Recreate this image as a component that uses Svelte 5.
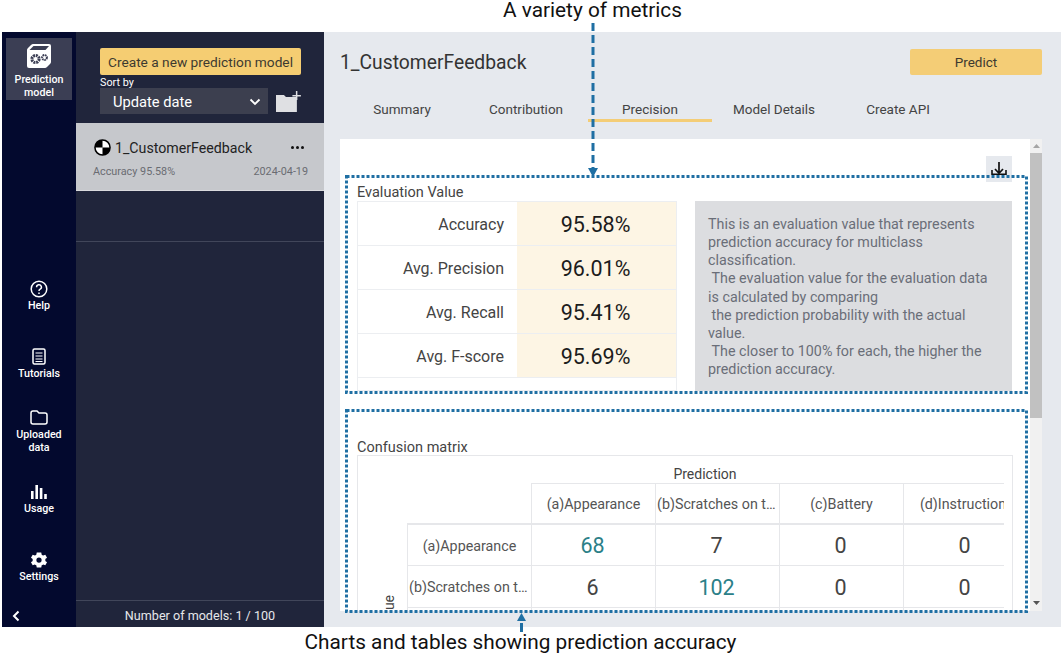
<script>
	const navBottom = ['Help', 'Tutorials', 'Uploaded data', 'Usage', 'Settings'];
	const tabs = ['Summary', 'Contribution', 'Precision', 'Model Details', 'Create API'];
	const metrics = [
		{ label: 'Accuracy', value: '95.58%' },
		{ label: 'Avg. Precision', value: '96.01%' },
		{ label: 'Avg. Recall', value: '95.41%' },
		{ label: 'Avg. F-score', value: '95.69%' }
	];
	const columns = ['(a)Appearance', '(b)Scratches on the product', '(c)Battery', '(d)Instruction'];
	const rows = [
		{ label: '(a)Appearance', cells: [68, 7, 0, 0], hit: 0 },
		{ label: '(b)Scratches on the product', cells: [6, 102, 0, 0], hit: 1 },
		{ label: '', cells: ['', '', '', ''], hit: -1 }
	];
</script>

<div class="page">
	<div class="caption top">A variety of metrics</div>

	<div class="app">
		<nav class="nav">
			<div class="nav-item active">
				<svg width="26" height="26" viewBox="0 0 26 26">
					<path d="M7 1h16q2 0 2 2v16q0 1-1 2l-3 3q-1 1-2 1H3q-2 0-2-2V7q0-1 1-2l3-3q1-1 2-1z" fill="#fff" />
					<path d="M7.500 3H23l-3.500 4H3.500z" fill="#3b3e54" />
					<circle cx="9.500" cy="16" r="3.600" fill="none" stroke="#3b3e54" stroke-width="3" stroke-dasharray="2 .8" />
					<circle cx="18.500" cy="14.500" r="2.400" fill="none" stroke="#3b3e54" stroke-width="2" stroke-dasharray="1.500 .6" />
				</svg>
				<span>Prediction model</span>
			</div>

			<div class="nav-lower">
				{#each navBottom as item}
					<div class="nav-item slot">
						<div class="nav-icon">
							{#if item === 'Help'}
								<svg width="18" height="18" viewBox="0 0 18 18" fill="none" stroke="#fff" stroke-width="1.500">
									<circle cx="9" cy="9" r="7.800" />
									<path d="M6.600 7.200a2.400 2.400 0 1 1 3.600 2c-.8.5-1.200 1-1.200 1.900" />
									<path d="M9 12.400v1.500" />
								</svg>
							{:else if item === 'Tutorials'}
								<svg width="14" height="17" viewBox="0 0 14 17" fill="none" stroke="#fff" stroke-width="1.500">
									<rect x="1" y="1" width="12" height="15" rx="1.500" />
									<path d="M3.500 5h7M3.500 8h7M3.500 11h7M3.500 13.500h7" stroke-width="1.200" />
								</svg>
							{:else if item === 'Uploaded data'}
								<svg width="18" height="15" viewBox="0 0 18 15" fill="none" stroke="#fff" stroke-width="1.500">
									<path d="M1 3q0-2 2-2h4l2 2h6q2 0 2 2v7q0 2-2 2H3q-2 0-2-2z" />
								</svg>
							{:else if item === 'Usage'}
								<svg width="16" height="14" viewBox="0 0 16 14" fill="#fff">
									<rect x="0" y="6" width="2.600" height="8" />
									<rect x="4.400" y="0" width="2.600" height="14" />
									<rect x="8.800" y="3" width="2.600" height="11" />
									<rect x="13.200" y="9" width="2.600" height="5" />
								</svg>
							{:else}
								<svg width="18" height="18" viewBox="0 0 24 24" fill="#fff">
									<path fill-rule="evenodd" d="M20.400 13.200a8.500 8.500 0 0 0 0-2.400l2.300-1.800-2.300-4-2.800 1.100a8.500 8.500 0 0 0-2-1.200L15 2h-6l-.6 2.900a8.500 8.500 0 0 0-2 1.200L3.600 5l-2.300 4 2.300 1.800a8.500 8.500 0 0 0 0 2.400L1.300 15l2.300 4 2.800-1.100a8.500 8.500 0 0 0 2 1.200L9 22h6l.6-2.900a8.500 8.500 0 0 0 2-1.200l2.800 1.100 2.300-4zM12 15.500a3.500 3.500 0 1 1 0-7 3.500 3.500 0 0 1 0 7z" />
								</svg>
							{/if}
						</div>
						<span>{item}</span>
					</div>
				{/each}
			</div>

			<div class="collapse">
				<svg width="8" height="12" viewBox="0 0 8 12" fill="none" stroke="#fff" stroke-width="2">
					<path d="M6.500 1.500 2 6l4.500 4.500" />
				</svg>
			</div>
		</nav>

		<aside class="list">
			<div class="list-head">
				<button class="create">Create a new prediction model</button>
				<div class="sort-label">Sort by</div>
				<div class="sort-row">
					<div class="select">
						<span>Update date</span>
						<svg width="12" height="8" viewBox="0 0 12 8" fill="none" stroke="#fff" stroke-width="1.800">
							<path d="M1.500 1.500 6 6l4.500-4.500" />
						</svg>
					</div>
					<svg width="25" height="21" viewBox="0 0 25 21" fill="#dfe0e3">
						<path d="M0 4h8l2 2h11v15H0z" />
						<path d="M20 0h1.500v4H25v1.500h-3.500V9H20V5.500h-3.500V4H20z" />
					</svg>
				</div>
			</div>

			<div class="model">
				<div class="model-top">
					<svg width="17" height="17" viewBox="0 0 18 18">
						<circle cx="9" cy="9" r="8" fill="#fff" stroke="#000" stroke-width="1.600" />
						<path d="M9 1a8 8 0 0 0-8 8h8zM9 9h8a8 8 0 0 1-8 8z" fill="#000" />
					</svg>
					<span class="model-name">1_CustomerFeedback</span>
					<span class="dots"><i></i><i></i><i></i></span>
				</div>
				<div class="model-meta">
					<span>Accuracy 95.58%</span>
					<span>2024-04-19</span>
				</div>
			</div>

			<div class="list-rule"></div>
			<div class="list-foot">Number of models: 1 / 100</div>
		</aside>

		<main class="main">
			<header class="main-head">
				<h1>1_CustomerFeedback</h1>
				<button class="predict">Predict</button>
			</header>

			<div class="tabs">
				{#each tabs as tab}
					<div class="tab" class:current={tab === 'Precision'}>{tab}</div>
				{/each}
			</div>

			<div class="panel">
				<div class="scroll">
					<div class="tools">
						<div class="download">
							<svg width="18" height="18" viewBox="0 0 18 18" fill="none" stroke="#111" stroke-width="1.700">
								<path d="M9 2v11M5 9l4 4.300L13 9" />
								<path d="M2 10v4.200h14V10" stroke-width="1.600" />
							</svg>
						</div>
					</div>

					<h2 class="eval-title">Evaluation Value</h2>
					<div class="eval">
						<div class="eval-table">
							{#each metrics as m}
								<div class="eval-row">
									<div class="eval-label">{m.label}</div>
									<div class="eval-value">{m.value}</div>
								</div>
							{/each}
						</div>
						<div class="eval-note">
							This is an evaluation value that represents prediction accuracy for multiclass classification.<br />
							&nbsp;The evaluation value for the evaluation data is calculated by comparing<br />
							&nbsp;the prediction probability with the actual value.<br />
							&nbsp;The closer to 100% for each, the higher the prediction accuracy.
						</div>
					</div>

					<h2 class="matrix-title">Confusion matrix</h2>
					<div class="matrix">
						<div class="pred-label">Prediction</div>
						<div class="matrix-body">
							<div class="true-label"><span>True value</span></div>
							<div class="matrix-grid">
								<div class="corner"></div>
								{#each columns as c}
									<div class="col-head"><span>{c}</span></div>
								{/each}
								{#each rows as r}
									<div class="row-head"><span>{r.label}</span></div>
									{#each r.cells as n, i}
										<div class="cell" class:hit={i === r.hit}>{n}</div>
									{/each}
								{/each}
							</div>
						</div>
					</div>
				</div>

				<div class="scrollbar">
					<svg width="7" height="4" viewBox="0 0 7 4"><path d="M3.500 0 7 4H0z" fill="#a5a5a5" /></svg>
					<div class="thumb"></div>
					<svg width="7" height="4" viewBox="0 0 7 4"><path d="M3.500 4 7 0H0z" fill="#555" /></svg>
				</div>
			</div>
		</main>
	</div>

	<div class="caption bottom">Charts and tables showing prediction accuracy</div>

	<!-- callouts drawn over the screenshot -->
	<svg class="callouts" width="1061" height="655" viewBox="0 0 1061 655" fill="none" stroke="#1f6fa3">
		<rect x="346.500" y="176.500" width="680" height="216" stroke-width="3" stroke-dasharray="3 2" />
		<rect x="346.500" y="410.500" width="680" height="201" stroke-width="3" stroke-dasharray="3 2" />
		<path d="M593 23v147" stroke-width="3" stroke-dasharray="8 4" />
		<path d="M588 168h10l-5 9z" fill="#1f6fa3" stroke="none" />
		<path d="M521.500 613l4.500 8h-9z" fill="#1f6fa3" stroke="none" />
		<path d="M521.500 623v9" stroke-width="3" />
	</svg>
</div>

<style>
	:global(body) {
		margin: 0;
		background: #fff;
	}

	.page {
		position: relative;
		width: 1061px;
		height: 655px;
		overflow: hidden;
		font-family: Roboto, "Noto Sans", sans-serif;
		color: #333;
	}

	.caption {
		display: flex;
		align-items: center;
		justify-content: center;
		color: #111;
		font-size: 20.800px;
		white-space: nowrap;
	}

	.caption.top {
		height: 32px;
		width: 1185px;
		padding-bottom: 13px;
		box-sizing: border-box;
	}

	.caption.bottom {
		height: 28px;
		width: 1041px;
		padding-top: 2px;
		box-sizing: border-box;
	}

	.app {
		display: flex;
		height: 595px;
		margin-left: 2px;
	}

	/* left rail */
	.nav {
		width: 74px;
		flex: none;
		background: #03092e;
		display: flex;
		flex-direction: column;
		align-items: center;
		padding-top: 6px;
		box-sizing: border-box;
		color: #fff;
	}

	.nav-item {
		display: flex;
		flex-direction: column;
		align-items: center;
		text-align: center;
		font-size: 10.700px;
		font-weight: 500;
		line-height: 13px;
		width: 66px;
		gap: 1px;
	}

	.nav-item.active {
		background: #3b3e54;
		height: 62px;
		padding-top: 5px;
		box-sizing: border-box;
		gap: 4px;
	}

	.nav-item.slot {
		height: 67.800px;
		justify-content: center;
	}

	.nav-icon {
		height: 18px;
		display: flex;
		align-items: center;
	}

	.nav-lower {
		margin-top: 162px;
		display: flex;
		flex-direction: column;
	}

	.collapse {
		margin-top: auto;
		padding: 0 46px 7px 0;
		height: 20px;
		box-sizing: border-box;
	}

	/* model list */
	.list {
		width: 248px;
		flex: none;
		background: #20253b;
		display: flex;
		flex-direction: column;
		color: #fff;
	}

	.list-head {
		padding: 16px 23px 9px 24px;
	}

	.create {
		display: block;
		width: 201px;
		height: 27px;
		padding: 1px 0 0;
		border: 0;
		border-radius: 2px;
		background: #f5cd72;
		color: #3d3a30;
		font: 13.700px Roboto, sans-serif;
		white-space: nowrap;
	}

	.sort-label {
		font-size: 10.800px;
		line-height: 13px;
		padding-top: 1px;
		margin-bottom: -1px;
	}

	.sort-row {
		display: flex;
		align-items: center;
		gap: 8px;
	}

	.select {
		width: 169px;
		height: 26px;
		background: #3c3f4f;
		display: flex;
		align-items: center;
		justify-content: space-between;
		padding: 1px 7px 0 13px;
		box-sizing: border-box;
		font-size: 14.700px;
	}

	.model {
		background: #c6c8cc;
		height: 68px;
		padding: 14px 16px 0 18px;
		box-sizing: border-box;
		border-bottom: 1px solid #d9dadd;
		color: #222;
	}

	.model-top {
		display: flex;
		align-items: center;
		gap: 4px;
		height: 20px;
	}

	.model-name {
		font-size: 14.200px;
		flex: 1;
		padding-top: 1px;
	}

	.dots {
		display: flex;
		gap: 2px;
		margin-right: 4px;
	}

	.dots i {
		width: 3px;
		height: 3px;
		border-radius: 50%;
		background: #111;
	}

	.model-meta {
		display: flex;
		justify-content: space-between;
		margin: 8px 0 0 -1px;
		font-size: 10.800px;
		color: #6a6c72;
	}

	.list-rule {
		margin-top: 50px;
		border-top: 1px solid #41465a;
	}

	.list-foot {
		margin-top: auto;
		height: 27px;
		padding-top: 2px;
		box-sizing: border-box;
		border-top: 1px solid #41465a;
		display: flex;
		align-items: center;
		justify-content: center;
		font-size: 12.600px;
		color: #e6e7ea;
	}

	/* main area */
	.main {
		flex: 1;
		background: #e6e9ee;
		padding: 17px 19px 16px 16px;
		box-sizing: border-box;
		display: flex;
		flex-direction: column;
		min-width: 0;
	}

	.main-head {
		display: flex;
		align-items: center;
		justify-content: space-between;
		height: 26px;
	}

	h1 {
		margin: 0;
		font-size: 19.300px;
		font-weight: 400;
		color: #333;
	}

	.predict {
		width: 132px;
		height: 26px;
		border: 0;
		border-radius: 2px;
		background: #f4cd76;
		color: #3d3a30;
		font: 13.500px Roboto, sans-serif;
		padding: 0;
	}

	.tabs {
		display: flex;
		margin: 19px 0 17px 0;
	}

	.tab {
		width: 124px;
		height: 28px;
		box-sizing: border-box;
		text-align: center;
		font-size: 13.500px;
		line-height: 30px;
		color: #444;
		border-bottom: 3px solid transparent;
		white-space: nowrap;
	}

	.tab.current {
		border-bottom-color: #f4cd76;
	}

	.panel {
		flex: 1;
		min-height: 0;
		background: #fff;
		display: flex;
		width: 702px;
	}

	.scroll {
		flex: 1;
		min-width: 0;
		overflow: hidden;
		padding: 17px 18px 0 17px;
		box-sizing: border-box;
	}

	.scrollbar {
		width: 12px;
		flex: none;
		background: #f1f1f1;
		display: flex;
		flex-direction: column;
		align-items: center;
		justify-content: space-between;
		padding: 5px 0 6px;
		box-sizing: border-box;
	}

	.thumb {
		width: 12px;
		flex: 1;
		margin: 5px 0 183px;
		background: #c1c1c1;
	}

	.tools {
		display: flex;
		justify-content: flex-end;
		height: 26px;
		margin-bottom: 3px;
	}

	.download {
		width: 26px;
		height: 26px;
		background: #e6e9ee;
		display: flex;
		align-items: center;
		justify-content: center;
	}

	h2 {
		margin: 0;
		font-size: 14.500px;
		font-weight: 400;
		color: #444;
		line-height: 16px;
	}

	.eval {
		display: flex;
		gap: 18px;
		height: 190px;
	}

	.eval-table {
		width: 320px;
		flex: none;
		border: 1px solid #eceef1;
		box-sizing: border-box;
		overflow: hidden;
	}

	.eval-row {
		display: grid;
		grid-template-columns: 159px 1fr;
		height: 44px;
		border-bottom: 1px solid #eceef1;
		box-sizing: border-box;
	}

	.eval-label {
		display: flex;
		align-items: center;
		justify-content: flex-end;
		padding: 1px 13px 0 0;
		font-size: 16px;
		color: #444;
	}

	.eval-value {
		background: #fdf5e4;
		display: flex;
		align-items: center;
		justify-content: center;
		padding: 2px 2px 0 0;
		box-sizing: border-box;
		font-size: 21.500px;
		color: #1c1c1c;
	}

	.eval-note {
		flex: 1;
		background: #dcdde0;
		padding: 14px 13px 0;
		font-size: 14.300px;
		line-height: 18.150px;
		color: #6a6e78;
	}

	.matrix-title {
		margin-top: 49px;
	}

	.matrix {
		border: 1px solid #e6e7ea;
		box-sizing: border-box;
		width: 656px;
		padding-right: 8px;
		height: 300px;
		margin-top: -1px;
	}

	.pred-label {
		text-align: center;
		font-size: 14px;
		height: 27px;
		line-height: 36px;
		margin-left: 48px;
		color: #444;
	}

	.matrix-body {
		display: flex;
	}

	.true-label {
		width: 49px;
		flex: none;
		display: flex;
		justify-content: center;
		padding: 112px 0 0 13px;
		box-sizing: border-box;
		height: 200px;
		overflow: hidden;
	}

	.true-label span {
		writing-mode: vertical-rl;
		transform: rotate(180deg);
		font-size: 14px;
		height: 100px;
		text-align: right;
		color: #444;
	}

	.matrix-grid {
		display: grid;
		grid-template-columns: repeat(5, 124px);
		grid-auto-rows: 41.500px;
		width: 597px;
		overflow: hidden;
	}

	.corner {
		border-bottom: 2px solid #e6e7ea;
	}

	.col-head,
	.row-head,
	.cell {
		display: flex;
		align-items: center;
		justify-content: center;
		border-left: 1px solid #e6e7ea;
		border-bottom: 1px solid #e6e7ea;
		box-sizing: border-box;
		min-width: 0;
		padding-top: 2px;
		font-size: 14.300px;
		color: #555;
	}

	.col-head {
		border-top: 1px solid #e6e7ea;
		border-bottom-width: 2px;
	}

	.col-head:nth-child(5) {
		padding-right: 5px;
	}

	.col-head span,
	.row-head span {
		overflow: hidden;
		text-overflow: ellipsis;
		white-space: nowrap;
		padding: 0 1px;
	}

	.cell {
		font-size: 21.500px;
		padding-right: 2px;
		color: #444;
	}

	.cell.hit {
		color: #2b8088;
	}

	.callouts {
		position: absolute;
		left: 0;
		top: 0;
		pointer-events: none;
	}
</style>
